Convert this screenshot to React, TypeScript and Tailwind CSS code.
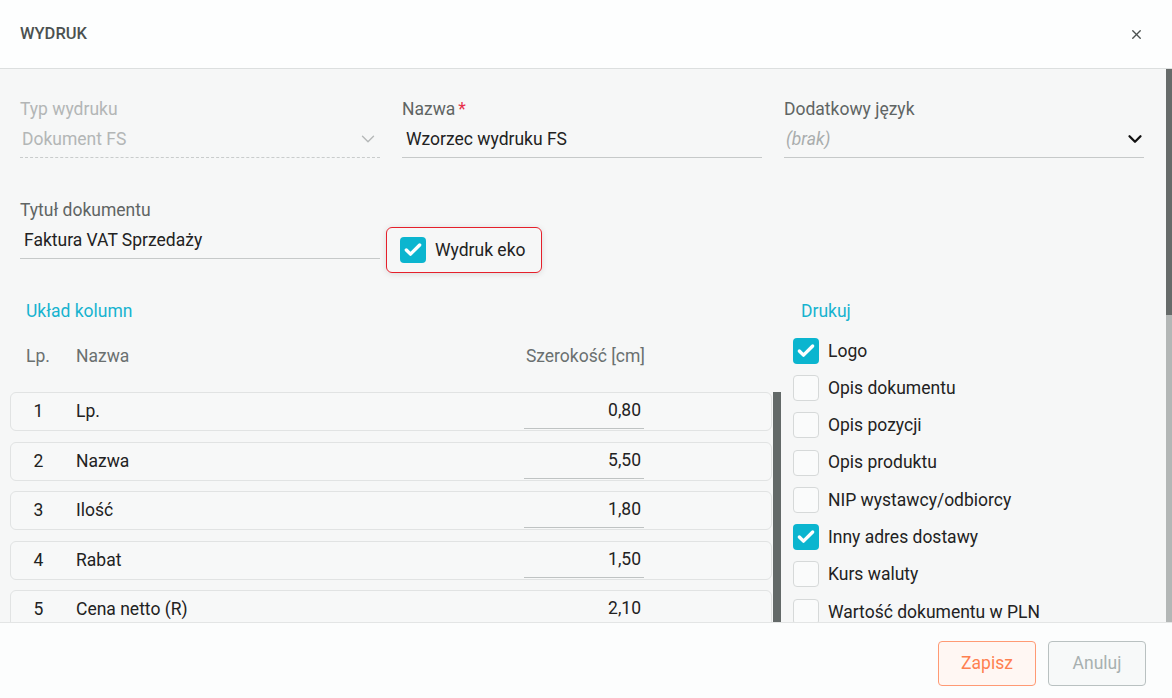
import { Check, ChevronDown, X } from "lucide-react";

const columns = [
  { lp: 1, name: "Lp.", width: "0,80" },
  { lp: 2, name: "Nazwa", width: "5,50" },
  { lp: 3, name: "Ilość", width: "1,80" },
  { lp: 4, name: "Rabat", width: "1,50" },
  { lp: 5, name: "Cena netto (R)", width: "2,10" },
];

const printOptions = [
  { label: "Logo", checked: true },
  { label: "Opis dokumentu", checked: false },
  { label: "Opis pozycji", checked: false },
  { label: "Opis produktu", checked: false },
  { label: "NIP wystawcy/odbiorcy", checked: false },
  { label: "Inny adres dostawy", checked: true },
  { label: "Kurs waluty", checked: false },
  { label: "Wartość dokumentu w PLN", checked: false },
];

const Box = ({ checked }: { checked: boolean }) =>
  checked ? (
    <span className="flex h-[26px] w-[26px] shrink-0 items-center justify-center rounded-[4px] bg-[#0bb5cf]">
      <Check className="h-[20px] w-[20px] text-white" strokeWidth={4} />
    </span>
  ) : (
    <span className="h-[26px] w-[26px] shrink-0 rounded-[4px] border border-[#d6d9d9] bg-[#fafbfb]" />
  );

const Field = ({
  label,
  value,
  required,
  disabled,
  placeholder,
  select,
}: {
  label: string;
  value: string;
  required?: boolean;
  disabled?: boolean;
  placeholder?: boolean;
  select?: boolean;
}) => (
  <div className="w-[360px]">
    <div className={`h-[20px] text-[17.5px] leading-[20px] ${disabled ? "text-[#b3b6b6]" : "text-[#5f6564]"}`}>
      {label}
      {required && <span className="ml-[3px] text-[#e6304a]">*</span>}
    </div>
    <div
      className={`mt-[8px] flex h-[31px] items-center justify-between pb-[6px] text-[17.5px] ${
        disabled ? "border-b border-dashed border-[#c9cccc]" : "border-b border-[#c6c9c9]"
      }`}
    >
      <span
        className={
          disabled
            ? "pl-[2px] text-[#b3b6b6]"
            : placeholder
            ? "pl-[2px] italic text-[#a9adad]"
            : "pl-[4px] text-[#222]"
        }
      >
        {value}
      </span>
      {select && (
        <ChevronDown
          className={disabled ? "mr-[1px] h-[22px] w-[22px] text-[#b5b8b8]" : "mr-[-2px] h-[22px] w-[22px] text-[#111]"}
          strokeWidth={disabled ? 1.5 : 2.5}
        />
      )}
    </div>
  </div>
);

export default function App() {
  return (
    <div className="flex h-[698px] w-[1172px] flex-col overflow-hidden bg-white font-['Roboto',sans-serif]">
      <header className="flex h-[69px] shrink-0 items-center justify-between border-b border-[#dcdfdf] bg-[#fdfefe] pl-[20px] pr-[28px]">
        <h1 className="text-[16.5px] font-medium text-[#4b5150]">WYDRUK</h1>
        <X className="h-[15px] w-[15px] text-[#4b5150]" strokeWidth={2.2} />
      </header>

      <div className="flex h-[553px] overflow-hidden bg-[#f6f7f7]">
        <div className="flex-1 overflow-hidden pt-[30px] pl-[10px]">
          <div className="flex gap-[22px] pl-[10px]">
            <Field label="Typ wydruku" value="Dokument FS" disabled select />
            <Field label="Nazwa" value="Wzorzec wydruku FS" required />
            <Field label="Dodatkowy język" value="(brak)" placeholder select />
          </div>

          <div className="mt-[42px] flex gap-[6px] pl-[10px]">
            <Field label="Tytuł dokumentu" value="Faktura VAT Sprzedaży" />
            <div className="mt-[27px] flex h-[46px] w-[156px] items-center gap-[9px] rounded-[6px] border-[1.5px] border-[#e5202b] pl-[13px] shadow-[0_1px_6px_rgba(0,0,0,0.12)]">
              <Box checked />
              <span className="text-[17.5px] text-[#222]">Wydruk eko</span>
            </div>
          </div>

          <div className="mt-[28px] flex gap-[12px]">
            <section className="w-[771px]">
              <h2 className="h-[20px] pl-[16px] text-[17.5px] leading-[20px] text-[#16b3cf]">Układ kolumn</h2>
              <div className="mt-[25px] flex h-[20px] items-center text-[17.5px] leading-[20px] text-[#6a7070]">
                <span className="w-[56px] text-center">Lp.</span>
                <span className="ml-[10px] flex-1">Nazwa</span>
                <span className="mr-[136px] w-[140px] text-right">Szerokość [cm]</span>
              </div>
              <div className="mt-[26px] flex">
                <div className="flex w-[762px] flex-col gap-[10.5px]">
                  {columns.map((c) => (
                    <div
                      key={c.lp}
                      className="flex h-[39px] shrink-0 items-center rounded-[6px] border border-[#e1e3e3] bg-[#f7f8f8] text-[17.5px] text-[#222]"
                    >
                      <span className="w-[55px] text-center">{c.lp}</span>
                      <span className="ml-[10px] flex-1">{c.name}</span>
                      <span className="mr-[127px] mt-[2px] flex h-[33px] w-[120px] items-center justify-end border-b border-[#bfc3c3] pr-[3px] pb-[3px]">
                        {c.width}
                      </span>
                    </div>
                  ))}
                </div>
                <div className="ml-[1px] w-[8px] self-stretch bg-[#636968]" />
              </div>
            </section>

            <section className="flex-1">
              <h2 className="h-[20px] pl-[8px] text-[17.5px] leading-[20px] text-[#16b3cf]">Drukuj</h2>
              <div className="mt-[11px] flex flex-col">
                {printOptions.map((o) => (
                  <label key={o.label} className="flex h-[37.3px] shrink-0 items-center gap-[9px] text-[17.5px] text-[#222]">
                    <Box checked={o.checked} />
                    <span>{o.label}</span>
                  </label>
                ))}
              </div>
            </section>
          </div>
        </div>

        <div className="flex w-[6px] shrink-0 flex-col bg-[#b3b7b6]">
          <div className="h-[246px] bg-[#666b6a]" />
        </div>
      </div>

      <footer className="flex flex-1 items-start justify-end gap-[12px] border-t border-[#e3e5e5] bg-[#fcfdfd] pt-[18px] pr-[26px]">
        <button className="h-[45px] w-[98px] rounded-[4px] border border-[#ff9a74] bg-[#fff7f3] text-[17.5px] text-[#ff8050]">
          Zapisz
        </button>
        <button className="h-[45px] w-[98px] rounded-[4px] border border-[#b9c1c1] bg-[#f7f9f9] text-[17.5px] text-[#a7b0b0]">
          Anuluj
        </button>
      </footer>
    </div>
  );
}
